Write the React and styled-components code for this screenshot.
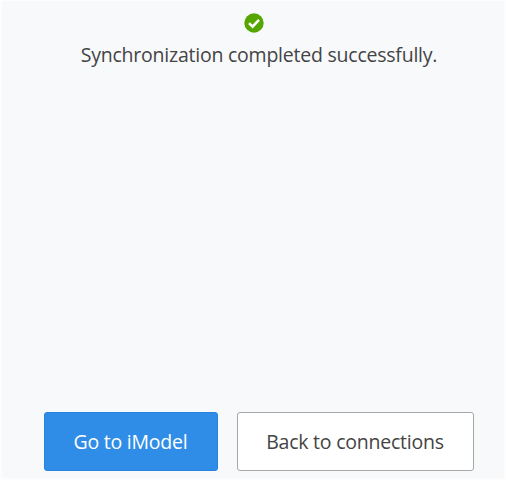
import React from 'react'
import styled, { createGlobalStyle } from 'styled-components'

const GlobalStyle = createGlobalStyle`
  body {
    margin: 0;
    background: #fff;
  }
`
const Root = styled.div`
  box-sizing: border-box;
  width: 506px;
  height: 480px;
  padding: 12px 30px 7px 42px;
  border: solid #fdfdfe;
  border-width: 1px 2px 2px 2px;
  background: #f8f9fb;
  display: flex;
  flex-direction: column;
  justify-content: space-between;
  font-family: 'Open Sans', 'Noto Sans', sans-serif;
  font-size: 19.5px;
  letter-spacing: -0.23px;
  color: #444;
`
const Status = styled.div`
  display: flex;
  flex-direction: column;
  align-items: center;
  gap: 8px;
`
const StatusIcon = styled.svg`
  display: block;
  width: 20px;
  height: 20px;
  margin-right: 10px;
`
const Message = styled.p`
  margin: 0;
  line-height: 28px;
  white-space: nowrap;
`
const Actions = styled.div`
  display: flex;
  gap: 19px;
`
const Button = styled.button`
  box-sizing: border-box;
  width: ${p => p.$primary ? '174px' : '237px'};
  height: 59px;
  padding: 0 1px 0 0;
  border: 1px solid ${p => p.$primary ? '#2583e0' : '#a5a7a9'};
  border-radius: 3px;
  background: ${p => p.$primary ? '#308de7' : '#fff'};
  color: ${p => p.$primary ? '#fff' : '#444'};
  font: inherit;
  letter-spacing: inherit;
  white-space: nowrap;
`

export default function App() {
  return (
    <Root>
      <GlobalStyle />
      <Status>
        <StatusIcon viewBox="0 0 20 20">
          <circle cx="10" cy="10" r="9.7" fill="#56a600" />
          <path d="M5 10.1l3.6 3.5 6.4-6.8" fill="none" stroke="#fff" strokeWidth="2.6" />
        </StatusIcon>
        <Message>Synchronization completed successfully.</Message>
      </Status>
      <Actions>
        <Button $primary>Go to iModel</Button>
        <Button>Back to connections</Button>
      </Actions>
    </Root>
  )
}
